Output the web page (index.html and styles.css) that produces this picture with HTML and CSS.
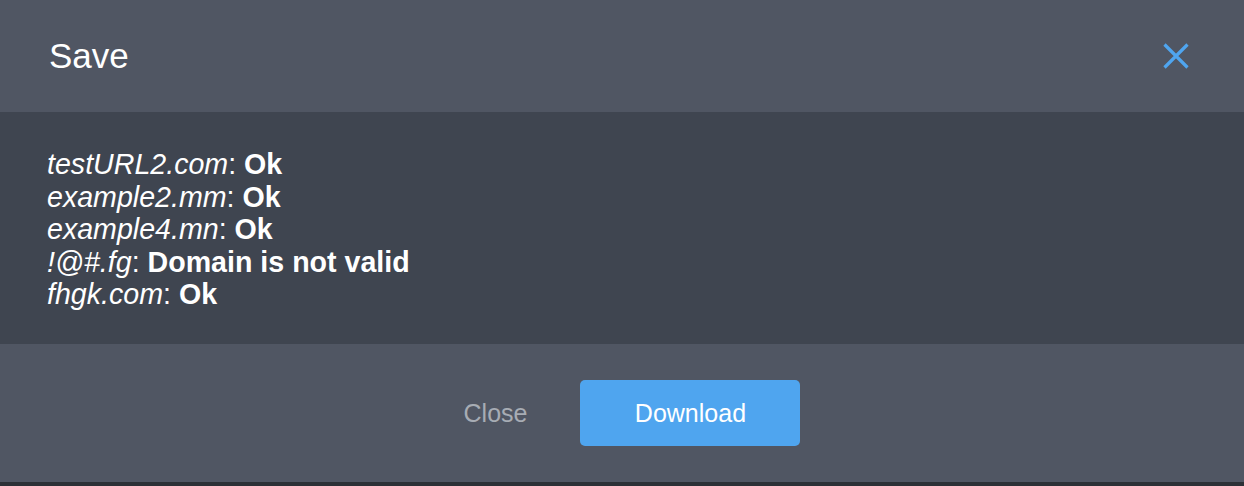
FILE: index.html
```html
<!DOCTYPE html>
<html>
<head>
<meta charset="utf-8">
<link rel="stylesheet" href="styles.css">
</head>
<body>
<div class="modal">
  <div class="modal-header">
    <h2 class="title">Save</h2>
    <button class="close-x" aria-label="Close">
      <svg width="26" height="26" viewBox="0 0 26 26"><path d="M1.5 1.5 L24.5 24.5 M24.5 1.5 L1.5 24.5" stroke="#4fa5ef" stroke-width="3.2" fill="none"/></svg>
    </button>
  </div>
  <div class="modal-body">
    <div class="line"><em>testURL2.com</em>: <strong>Ok</strong></div>
    <div class="line"><em>example2.mm</em>: <strong>Ok</strong></div>
    <div class="line"><em>example4.mn</em>: <strong>Ok</strong></div>
    <div class="line"><em>!@#.fg</em>: <strong>Domain is not valid</strong></div>
    <div class="line"><em>fhgk.com</em>: <strong>Ok</strong></div>
  </div>
  <div class="modal-footer">
    <button class="btn btn-link">Close</button>
    <button class="btn btn-primary">Download</button>
  </div>
</div>
<div class="bottom-strip"></div>
</body>
</html>
```

FILE: styles.css
```css
html, body {
  margin: 0;
  padding: 0;
  background: #2c3036;
  font-family: "Liberation Sans", Arial, Helvetica, sans-serif;
  color: #ffffff;
}
.modal {
  display: flex;
  flex-direction: column;
  background: #505663;
}
.modal-header {
  height: 112px;
  box-sizing: border-box;
  display: flex;
  align-items: center;
  justify-content: space-between;
  padding: 0 55px 0 49px;
}
.title {
  margin: 0;
  font-size: 35px;
  font-weight: normal;
  line-height: 40px;
}
.close-x {
  background: none;
  border: 0;
  padding: 0;
  width: 26px;
  height: 26px;
  display: flex;
  cursor: pointer;
}
.modal-body {
  background: #3f4550;
  height: 232px;
  box-sizing: border-box;
  padding: 36px 47px 0 47px;
  font-size: 28.6px;
  line-height: 32.5px;
}
.line em {
  font-style: italic;
}
.line strong {
  font-weight: bold;
}
.modal-footer {
  height: 138px;
  box-sizing: border-box;
  display: flex;
  align-items: center;
  justify-content: center;
  gap: 33px;
}
.btn {
  font-family: "Liberation Sans", Arial, Helvetica, sans-serif;
  font-size: 25px;
  border: 0;
  height: 66px;
  border-radius: 5px;
  cursor: pointer;
}
.btn-link {
  background: none;
  color: #a7acb4;
  padding: 0 20px;
}
.btn-primary {
  background: #4fa5ef;
  color: #ffffff;
  width: 220px;
}
.bottom-strip {
  height: 4px;
  background: #2c3036;
}
```
